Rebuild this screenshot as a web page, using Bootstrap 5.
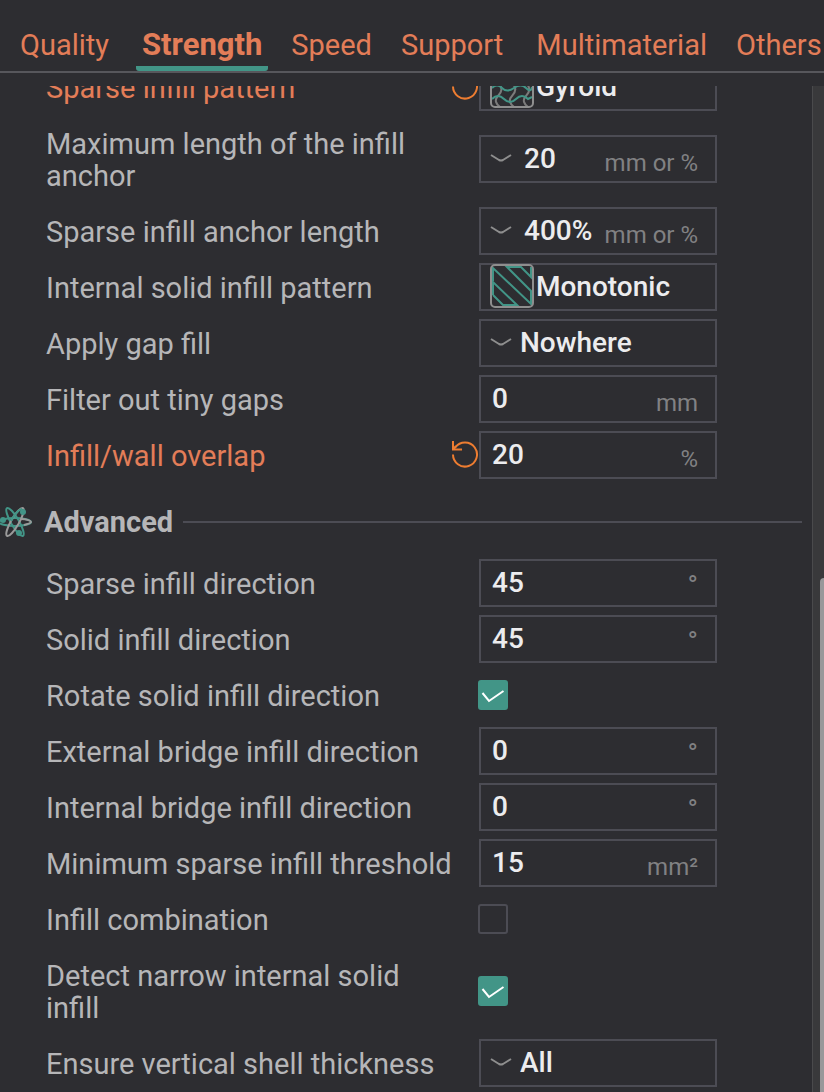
<!DOCTYPE html>
<html lang="en" data-bs-theme="dark">
<head>
<meta charset="utf-8">
<meta name="viewport" content="width=device-width, initial-scale=1">
<title>Process settings – Strength</title>
<link href="https://cdn.jsdelivr.net/npm/bootstrap@5.3.0/dist/css/bootstrap.min.css" rel="stylesheet">
<style>
:root { --bg: #2d2d31; --line: #4c4c54; --text: #b6b6b8; --unit: #818183; --changed: #e37d58; --accent: #429587; }
body { background: var(--bg); color: var(--text); font-family: Roboto, "Noto Sans", sans-serif; font-size: 29px; line-height: 32px; }
.settings-tabs { border-bottom: 2px solid #57575c; padding: 24px 0 0 14px; gap: 17px; }
.settings-tabs .nav-link { color: var(--changed); padding: 5px 6px 5px; border-bottom: 5px solid transparent; border-radius: 3px; white-space: nowrap; }
.settings-tabs .nav-link.active { font-size: 31px; font-weight: 700; border-color: transparent; background: linear-gradient(var(--accent), var(--accent)) bottom / 100% 5px no-repeat border-box; }
.settings-tabs .wide-gap { margin-left: 4px; }
.scroll-area { margin-top: 13px; }
/* list is scrolled part-way through its first row */
.setting-list { margin-top: -27px; }
.setting-row { padding: 13px 0 11px 46px; }
.setting-label { width: 408px; }
.revert-slot { width: 25px; height: 32px; }
.revert-btn { width: 28px; height: 28px; }
.changed { color: var(--changed); }
.field { width: 238px; height: 48px; margin: -9px 0 -7px; border: 2px solid var(--line); padding: 0 17px 0 10px; font-size: 28px; }
.field:focus-within { border-color: var(--accent); }
.field input, .field select { appearance: none; background: transparent; border: 0; outline: 0; padding: 0; min-width: 0; height: 32px; margin-bottom: 1px; color: #ececee; font-weight: 500; line-height: 32px; }
.field input { padding-left: 1px; }
.field option { background: var(--bg); }
.chevron { width: 22px; margin: 0 8px 0 -1px; }
.field input.combo-value { padding-left: 4px; }
.pattern { width: 44px; height: 44px; margin: 0 2px 2px -1px; }
.unit { color: var(--unit); font-size: 24px; padding-top: 8px; }
.unit-degree { font-size: 28px; padding-top: 5px; }
.tick-slot { width: 238px; }
.setting-tick { appearance: none; display: block; width: 30px; height: 30px; margin: 0 0 2px -1px; border: 2px solid var(--line); border-radius: 3px; }
.setting-tick:checked { border-color: var(--accent); background: var(--accent) url("data:image/svg+xml,%3Csvg xmlns='http://www.w3.org/2000/svg' viewBox='0 0 30 30'%3E%3Cpath d='M4.500 13l6.500 8L25.500 11' fill='none' stroke='white' stroke-width='2'/%3E%3C/svg%3E") center / 30px 30px no-repeat; }
.group-head { padding: 23px 10px 17px 0; }
.group-head h2 { color: var(--text); font-size: 29px; font-weight: 700; line-height: 32px; margin: 0 10px 0 12px; }
.group-head .rule { height: 2px; background: var(--line); }
.scroll-track { width: 12px; background: #39393b; border-left: 1px solid #4a4a4c; padding-top: 492px; }
.scroll-thumb { width: 4px; background: #98989a; border-radius: 4px 0 0 0; }
</style>
</head>
<body>
<div class="d-flex flex-column vh-100 overflow-hidden">
  <nav class="nav settings-tabs flex-nowrap align-items-end overflow-hidden flex-shrink-0" aria-label="Settings">
    <a class="nav-link" href="#quality">Quality</a>
    <a class="nav-link active wide-gap" href="#strength" aria-current="page">Strength</a>
    <a class="nav-link" href="#speed">Speed</a>
    <a class="nav-link" href="#support">Support</a>
    <a class="nav-link wide-gap" href="#multimaterial">Multimaterial</a>
    <a class="nav-link" href="#others">Others</a>
  </nav>

  <div class="scroll-area d-flex flex-fill overflow-hidden">
    <form class="setting-list flex-fill">
      <div class="setting-row d-flex align-items-center">
        <label class="setting-label changed" for="sparsePattern">Sparse infill pattern</label>
        <div class="revert-slot d-flex justify-content-end"><button type="button" class="btn p-0 border-0 revert-btn d-flex flex-shrink-0" aria-label="Revert sparse infill pattern"><svg width="28" height="28" viewBox="0 0 28 28" fill="none" stroke="#ee7d31" stroke-width="2"><path d="M2 14.500a12 12 0 1 0 2.300-7M2 1v8.500h9M2 9.500L5 6"/></svg></button></div>
        <div class="field d-flex align-items-center">
          <svg class="pattern flex-shrink-0" viewBox="0 0 44 44" fill="none" stroke-width="2"><g stroke="#7b7b7b"><path d="M8 19c5 5 4 9 0 13s-2 8 2 11M22 19c5 5 4 9 0 13s-2 8 2 11M36 19c5 5 4 9 0 13s-2 8 2 11M8 2c-4 5 5 9 0 17M22 2c-4 5 5 9 0 17M36 2c-4 5 5 9 0 17"/></g><g stroke="#429587"><path d="M2 12q5-5 10 0t12 0 12 0 6-1M2 24q5-5 10 0t12 0 12 0 6-1M2 35q6-6 12 0t12 0 12 0l4-2"/></g><rect x="1" y="1" width="42" height="42" rx="4" stroke="#8e8e8e"/></svg>
          <select id="sparsePattern" class="flex-fill"><option>Gyroid</option><option>Grid</option></select>
        </div>
      </div>
      <div class="setting-row d-flex align-items-center">
        <label class="setting-label" for="anchorMax">Maximum length of the infill anchor</label>
        <div class="revert-slot"></div>
        <div class="field d-flex align-items-center">
          <svg class="chevron flex-shrink-0" viewBox="0 0 22 10" fill="none" stroke="#8e8e8e" stroke-width="2"><path d="M1 1l8 5q2 1 4 0l8-5"/></svg>
          <input id="anchorMax" class="combo-value flex-fill" type="text" value="20"><span class="unit text-nowrap">mm or %</span>
        </div>
      </div>
      <div class="setting-row d-flex align-items-center">
        <label class="setting-label" for="anchorLen">Sparse infill anchor length</label>
        <div class="revert-slot"></div>
        <div class="field d-flex align-items-center">
          <svg class="chevron flex-shrink-0" viewBox="0 0 22 10" fill="none" stroke="#8e8e8e" stroke-width="2"><path d="M1 1l8 5q2 1 4 0l8-5"/></svg>
          <input id="anchorLen" class="combo-value flex-fill" type="text" value="400%"><span class="unit text-nowrap">mm or %</span>
        </div>
      </div>
      <div class="setting-row d-flex align-items-center">
        <label class="setting-label" for="solidPattern">Internal solid infill pattern</label>
        <div class="revert-slot"></div>
        <div class="field d-flex align-items-center">
          <svg class="pattern flex-shrink-0" viewBox="0 0 44 44" fill="none" stroke-width="2"><path stroke="#429587" d="M3 31v-13L27 41H13L3 31M3 17V4L41 40V27L17 3H31L41 13V3"/><rect x="1" y="1" width="42" height="42" rx="4" stroke="#8e8e8e"/></svg>
          <select id="solidPattern" class="flex-fill"><option>Monotonic</option><option>Rectilinear</option></select>
        </div>
      </div>
      <div class="setting-row d-flex align-items-center">
        <label class="setting-label" for="gapFill">Apply gap fill</label>
        <div class="revert-slot"></div>
        <div class="field d-flex align-items-center">
          <svg class="chevron flex-shrink-0" viewBox="0 0 22 10" fill="none" stroke="#8e8e8e" stroke-width="2"><path d="M1 1l8 5q2 1 4 0l8-5"/></svg>
          <select id="gapFill" class="flex-fill"><option>Nowhere</option><option>Everywhere</option></select>
        </div>
      </div>
      <div class="setting-row d-flex align-items-center">
        <label class="setting-label" for="tinyGaps">Filter out tiny gaps</label>
        <div class="revert-slot"></div>
        <div class="field d-flex align-items-center"><input id="tinyGaps" class="flex-fill" type="text" value="0"><span class="unit">mm</span></div>
      </div>
      <div class="setting-row d-flex align-items-center">
        <label class="setting-label changed" for="overlap">Infill/wall overlap</label>
        <div class="revert-slot d-flex justify-content-end"><button type="button" class="btn p-0 border-0 revert-btn d-flex flex-shrink-0" aria-label="Revert infill/wall overlap"><svg width="28" height="28" viewBox="0 0 28 28" fill="none" stroke="#ee7d31" stroke-width="2"><path d="M2 14.500a12 12 0 1 0 2.300-7M2 1v8.500h9M2 9.500L5 6"/></svg></button></div>
        <div class="field d-flex align-items-center"><input id="overlap" class="flex-fill" type="text" value="20"><span class="unit">%</span></div>
      </div>

      <div class="group-head d-flex align-items-center">
        <svg class="flex-shrink-0" width="32" height="32" viewBox="0 0 32 32" fill="none" stroke-width="2"><g stroke="#429587"><ellipse cx="15" cy="16" rx="16" ry="4"/><ellipse cx="15" cy="16" rx="16" ry="4" transform="rotate(60 15 16)"/></g><ellipse cx="15" cy="16" rx="16" ry="4" transform="rotate(120 15 16)" stroke="#9a9a9a"/><path d="M21 13c6 0 10 2 10 3s-3 2-7 3" stroke="#9a9a9a"/><path d="M11 15c3-6 8-12 11-12" stroke="#429587"/><g fill="#429587"><circle cx="23" cy="6" r="3"/><circle cx="3" cy="14" r="3"/><circle cx="19" cy="27" r="3"/></g></svg>
        <h2>Advanced</h2>
        <div class="rule flex-fill"></div>
      </div>

      <div class="setting-row d-flex align-items-center">
        <label class="setting-label" for="sparseDir">Sparse infill direction</label>
        <div class="revert-slot"></div>
        <div class="field d-flex align-items-center"><input id="sparseDir" class="flex-fill" type="text" value="45"><span class="unit unit-degree">°</span></div>
      </div>
      <div class="setting-row d-flex align-items-center">
        <label class="setting-label" for="solidDir">Solid infill direction</label>
        <div class="revert-slot"></div>
        <div class="field d-flex align-items-center"><input id="solidDir" class="flex-fill" type="text" value="45"><span class="unit unit-degree">°</span></div>
      </div>
      <div class="setting-row d-flex align-items-center">
        <label class="setting-label" for="rotateSolid">Rotate solid infill direction</label>
        <div class="revert-slot"></div>
        <div class="tick-slot"><input id="rotateSolid" class="setting-tick" type="checkbox" checked></div>
      </div>
      <div class="setting-row d-flex align-items-center">
        <label class="setting-label" for="extBridge">External bridge infill direction</label>
        <div class="revert-slot"></div>
        <div class="field d-flex align-items-center"><input id="extBridge" class="flex-fill" type="text" value="0"><span class="unit unit-degree">°</span></div>
      </div>
      <div class="setting-row d-flex align-items-center">
        <label class="setting-label" for="intBridge">Internal bridge infill direction</label>
        <div class="revert-slot"></div>
        <div class="field d-flex align-items-center"><input id="intBridge" class="flex-fill" type="text" value="0"><span class="unit unit-degree">°</span></div>
      </div>
      <div class="setting-row d-flex align-items-center">
        <label class="setting-label" for="minArea">Minimum sparse infill threshold</label>
        <div class="revert-slot"></div>
        <div class="field d-flex align-items-center"><input id="minArea" class="flex-fill" type="text" value="15"><span class="unit">mm²</span></div>
      </div>
      <div class="setting-row d-flex align-items-center">
        <label class="setting-label" for="combine">Infill combination</label>
        <div class="revert-slot"></div>
        <div class="tick-slot"><input id="combine" class="setting-tick" type="checkbox"></div>
      </div>
      <div class="setting-row d-flex align-items-center">
        <label class="setting-label" for="narrow">Detect narrow internal solid infill</label>
        <div class="revert-slot"></div>
        <div class="tick-slot"><input id="narrow" class="setting-tick" type="checkbox" checked></div>
      </div>
      <div class="setting-row d-flex align-items-center">
        <label class="setting-label" for="shell">Ensure vertical shell thickness</label>
        <div class="revert-slot"></div>
        <div class="field d-flex align-items-center">
          <svg class="chevron flex-shrink-0" viewBox="0 0 22 10" fill="none" stroke="#8e8e8e" stroke-width="2"><path d="M1 1l8 5q2 1 4 0l8-5"/></svg>
          <select id="shell" class="flex-fill"><option>All</option><option>None</option></select>
        </div>
      </div>
    </form>
    <div class="scroll-track d-flex justify-content-end flex-shrink-0"><div class="scroll-thumb"></div></div>
  </div>
</div>
<script src="https://cdn.jsdelivr.net/npm/bootstrap@5.3.0/dist/js/bootstrap.bundle.min.js"></script>
</body>
</html>
